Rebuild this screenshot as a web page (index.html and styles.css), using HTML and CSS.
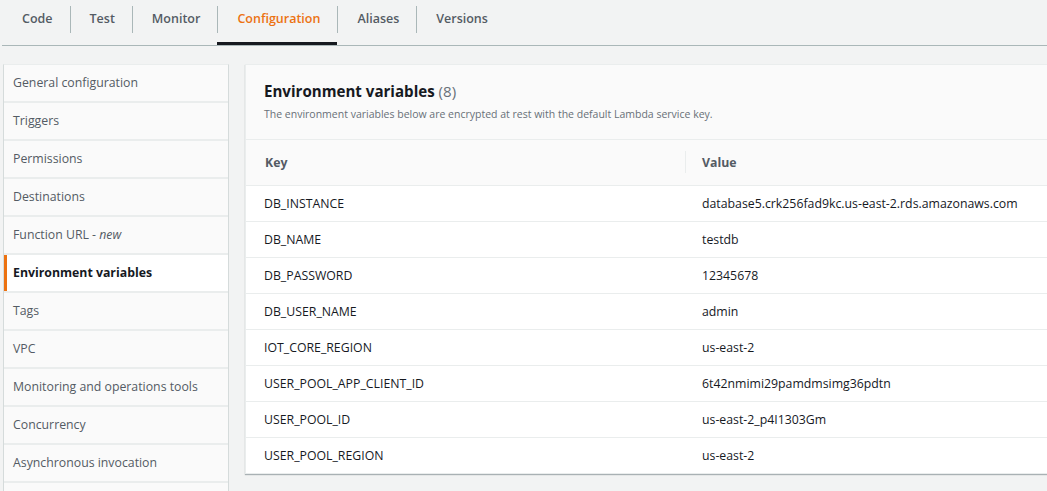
FILE: index.html
```html
<!DOCTYPE html>
<html>
<head>
<meta charset="utf-8">
<link rel="stylesheet" href="styles.css">
</head>
<body>
<div class="page">
  <nav class="tabs">
    <div class="tab">Code</div>
    <div class="tab">Test</div>
    <div class="tab">Monitor</div>
    <div class="tab active">Configuration</div>
    <div class="tab">Aliases</div>
    <div class="tab">Versions</div>
  </nav>
  <div class="layout">
    <ul class="side">
      <li>General configuration</li>
      <li>Triggers</li>
      <li>Permissions</li>
      <li>Destinations</li>
      <li>Function URL - <em>new</em></li>
      <li class="current">Environment variables</li>
      <li>Tags</li>
      <li>VPC</li>
      <li>Monitoring and operations tools</li>
      <li>Concurrency</li>
      <li>Asynchronous invocation</li>
      <li></li>
    </ul>
    <section class="card">
      <header class="card-head">
        <h2>Environment variables <span class="count">(8)</span></h2>
        <p>The environment variables below are encrypted at rest with the default Lambda service key.</p>
      </header>
      <table class="vars">
        <thead>
          <tr><th class="k">Key</th><th class="v"><span class="sep"></span>Value</th></tr>
        </thead>
        <tbody>
          <tr><td>DB_INSTANCE</td><td>database5.crk256fad9kc.us-east-2.rds.amazonaws.com</td></tr>
          <tr><td>DB_NAME</td><td>testdb</td></tr>
          <tr><td>DB_PASSWORD</td><td>12345678</td></tr>
          <tr><td>DB_USER_NAME</td><td>admin</td></tr>
          <tr><td>IOT_CORE_REGION</td><td>us-east-2</td></tr>
          <tr><td>USER_POOL_APP_CLIENT_ID</td><td>6t42nmimi29pamdmsimg36pdtn</td></tr>
          <tr><td>USER_POOL_ID</td><td>us-east-2_p4I1303Gm</td></tr>
          <tr><td>USER_POOL_REGION</td><td>us-east-2</td></tr>
        </tbody>
      </table>
    </section>
  </div>
</div>
</body>
</html>
```
FILE: styles.css
```css
* { box-sizing: border-box; }
html, body {
  margin: 0;
  padding: 0;
  background: #f2f3f3;
  overflow: hidden;
  height: 491px;
}
body {
  font-family: "Open Sans", "Noto Sans", Arial, sans-serif;
  font-size: 12.3px;
  color: #16191f;
}
.page {
  padding-left: 2px;
  width: 1100px;
}
.tabs {
  display: flex;
  height: 46px;
  border-bottom: 1px solid #aab7b8;
}
.tab {
  position: relative;
  padding: 0 17px 0 20px;
  height: 45px;
  line-height: 37px;
  font-size: 12.5px;
  font-weight: 600;
  color: #545b64;
}
.tab + .tab::before {
  content: "";
  position: absolute;
  left: 0;
  top: 6px;
  height: 27px;
  width: 1px;
  background: #aab7b8;
}
.tab.active {
  color: #ec7211;
  box-shadow: inset 0 -3px 0 #16191f;
}
.layout {
  display: flex;
  gap: 16px;
  padding: 18px 0 0 1px;
  align-items: flex-start;
}
.side {
  list-style: none;
  margin: 0;
  padding: 0;
  width: 226px;
  border-left: 1px solid #d5dbdb;
  border-right: 1px solid #d5dbdb;
  border-top: 1px solid #eaeded;
  display: flex;
  flex-direction: column;
  gap: 2px;
  background: #eaeded;
}
.side li {
  height: 36px;
  line-height: 36px;
  padding-left: 9px;
  background: #fafafa;
  color: #545b64;
  font-size: 12.3px;
}
.side li em { font-style: italic; }
.side li.current {
  background: #fff;
  color: #16191f;
  font-weight: 700;
  box-shadow: inset 3px 0 0 #ec7211;
}
.card {
  width: 830px;
  background: #fff;
  border: 1px solid #eaeded;
  box-shadow: 0 1px 1px 0 rgba(0, 28, 36, 0.3);
}
.card-head {
  background: #fafafa;
  padding: 14px 18px 0;
  height: 75px;
  border-bottom: 1px solid #eaeded;
}
.card-head h2 {
  margin: 0;
  font-size: 15.1px;
  font-weight: 700;
  line-height: 24px;
  color: #16191f;
}
.card-head .count {
  font-weight: 400;
  color: #687078;
}
.card-head p {
  margin: 4px 0 0;
  font-size: 10.5px;
  color: #687078;
}
.vars {
  width: 100%;
  border-collapse: collapse;
}
.vars th {
  height: 45px;
  background: #fafafa;
  text-align: left;
  font-weight: 700;
  color: #545b64;
  font-size: 12.3px;
  border-bottom: 1px solid #eaeded;
  padding: 0;
}
.vars th.k { width: 439px; padding-left: 19px; }
.vars th.v { position: relative; padding-left: 17px; }
.vars .sep {
  position: absolute;
  left: 0;
  top: 11px;
  height: 22px;
  width: 1px;
  background: #eaeded;
}
.vars td {
  height: 36px;
  padding: 0;
  border-bottom: 1px solid #eaeded;
  font-size: 12.3px;
}
.vars td:first-child { padding-left: 18px; }
.vars td:last-child { padding-left: 17px; }
.vars tr:last-child td { border-bottom: none; }
```
